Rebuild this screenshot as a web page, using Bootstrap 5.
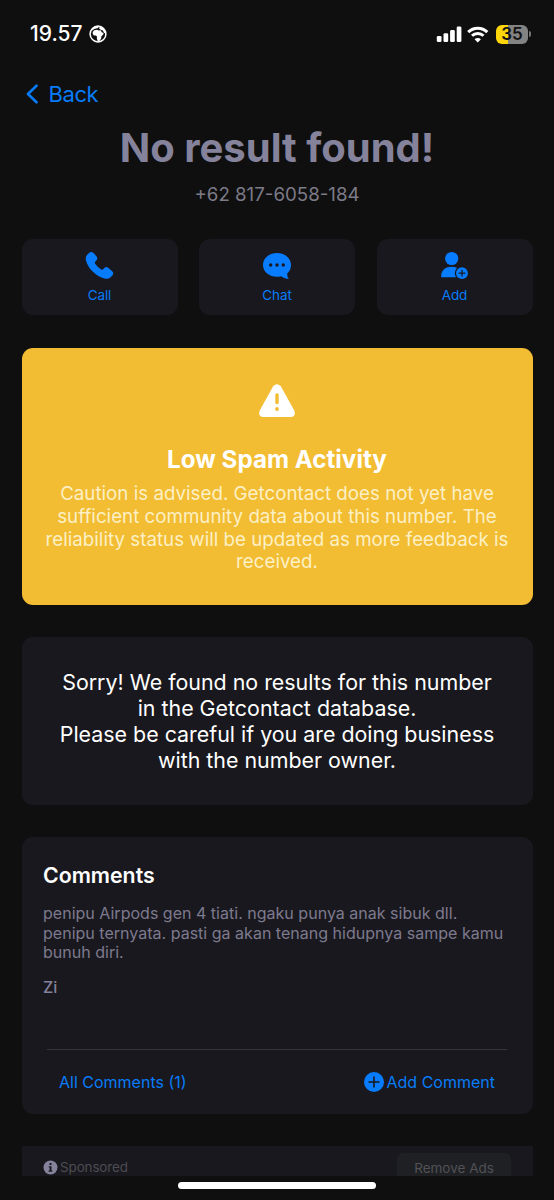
<!DOCTYPE html>
<html lang="en" data-bs-theme="dark">
<head>
<meta charset="utf-8">
<meta name="viewport" content="width=device-width, initial-scale=1">
<title>Getcontact</title>
<link rel="stylesheet" href="https://cdn.jsdelivr.net/npm/bootstrap@5.3.0/dist/css/bootstrap.min.css">
<style>
  body { background: #0f0f0f; font-family: Inter, "Liberation Sans", sans-serif; }
  .phone-screen { width: 554px; height: 1200px; background: #0f0f0f; }
  svg { display: block; flex: none; }
  .status-bar { height: 68px; padding: 0 23px 0 30px; }
  .clock { font-size: 21px; font-weight: 500; line-height: 24px; color: #fff; }
  .globe { margin-left: 7px; }
  .battery { width: 32px; height: 19px; border-radius: 6px; background: linear-gradient(90deg, #ffd60a 37%, #838383 37%); color: #111; font-size: 17px; font-weight: 600; line-height: 19px; margin-left: 6px; }
  .battery-cap { width: 2px; height: 6px; border-radius: 0 2px 2px 0; background: #777; margin-left: 1px; }
  .tap { color: #087cf8; text-decoration: none; }
  .back-link { height: 52px; padding-left: 26px; gap: 9.5px; font-size: 22px; letter-spacing: -.4px; }
  .result-title { font-size: 40px; line-height: 48px; font-weight: 700; color: #85829b; margin-top: 4px; }
  .number-line { font-size: 18.7px; line-height: 24px; color: #7c7b87; margin-top: 11px; }
  .page-body { margin: 32px 21.5px 0 21.5px; }
  .action-row { gap: 21.5px; }
  .panel { background: #19181e; border-radius: 11px; }
  .action-tile { height: 75.5px; padding-top: 12px; font-size: 13.5px; line-height: 18px; letter-spacing: -.1px; }
  .tile-label { margin-top: 5px; }
  .spam-card { background: #f2bc33; height: 257px; margin-top: 33px; border-radius: 11px; padding-top: 36.5px; }
  .spam-title { font-size: 24.2px; line-height: 30px; font-weight: 650; color: #fff; margin-top: 27px; }
  .spam-text { font-size: 18.76px; line-height: 22.6px; color: #fdf0c4; margin-top: 8.4px; }
  .sorry-card { height: 168px; margin-top: 32px; padding-top: 32px; font-size: 21.4px; line-height: 26px; color: #fff; }
  .comments-card { height: 277px; margin-top: 32px; padding: 24px 21.5px 0; }
  .comments-title { font-size: 21.3px; line-height: 28px; font-weight: 600; color: #fff; }
  .comment-text { font-size: 16.05px; line-height: 19.5px; color: #7d7a8e; margin-top: 15.5px; }
  .comment-name { font-size: 16px; line-height: 20px; font-weight: 500; color: #85829b; margin-top: 14px; }
  .divider { height: 1px; background: #35353a; margin: 52px 4px 0; }
  .comment-actions { font-size: 16px; padding: 0 16px; height: 65px; }
  .add-link { gap: 3px; }
  .ad-strip { height: 29.5px; margin-top: 32.5px; padding: 7px 21.5px 0; background: #19181e; font-size: 13.5px; color: #4c4c50; }
  .sponsor { height: 29px; gap: 2px; letter-spacing: -.15px; }
  .remove-btn { width: 114px; height: 30px; border-radius: 6px; background: #1f2024; color: #515156; line-height: 30px; }
  .home-bar { width: 198px; height: 7px; border-radius: 4px; background: #fff; margin-top: 6.500px; }
</style>
</head>
<body>
<main class="phone-screen overflow-hidden text-nowrap">
  <header class="status-bar d-flex align-items-center justify-content-between">
    <div class="d-flex align-items-center clock"><span>19.57</span>
      <svg class="globe" width="18" height="18" viewBox="0 0 18 18"><circle cx="9" cy="9" r="7.900" fill="none" stroke="#fff" stroke-width="1.500"/><path fill="#fff" d="M3.700 7 5.200 5.200l3-.5 1.300.8 2.300-.2.900 2 1.900.6-.4 1.700-1.900 1.800-.1 2.200-1.900 2.600-1.700-.3-.8-2.600.2-1.700-1.100-1.100-2 .1-1.200-1.600zM2.800 4.400 6 1.300l4-.4-.8 2.100-2 .5-1.900.4-1.900 1.500zM10.800 1l4.700 3.200 1.500 4-1.900-.3-1.300-2.400-2.200-.7-1.500-1.200z"/></svg>
    </div>
    <div class="d-flex align-items-center">
      <svg width="26" height="17" viewBox="0 0 26 17" fill="#fff"><rect x=".8" y="10" width="4.700" height="6" rx="1.300"/><rect x="7.500" y="7.300" width="4.700" height="8.700" rx="1.300"/><rect x="14.100" y="4.100" width="4.700" height="11.900" rx="1.300"/><rect x="20.700" y=".5" width="4.700" height="15.500" rx="1.300"/></svg>
      <svg class="ms-1" width="24" height="17" viewBox="0 0 24 17" fill="none" stroke="#fff" stroke-width="3"><path d="M2.200 6.100a13.500 13.500 0 0 1 19.100 0"/><path d="M6 9.800a8.200 8.200 0 0 1 11.500 0"/><path d="m11.750 16.500-3.200-3.300a4.600 4.600 0 0 1 6.400 0z" fill="#fff" stroke="none"/></svg>
      <div class="battery text-center">35</div><div class="battery-cap"></div>
    </div>
  </header>

  <a href="#" class="tap back-link d-flex align-items-center">
    <svg width="13" height="20" viewBox="0 0 13 20" fill="none" stroke="#087cf8" stroke-width="2.600" stroke-linecap="round" stroke-linejoin="round"><path d="M10.500 1.700 2 10l8.500 8.300"/></svg>
    <span>Back</span>
  </a>

  <h1 class="result-title text-center mb-0">No result found!</h1>
  <div class="number-line text-center">+62 817-6058-184</div>

  <div class="page-body">
    <div class="action-row d-flex">
      <a href="#" class="tap panel action-tile flex-fill w-100 d-flex flex-column align-items-center">
        <svg width="30" height="30" viewBox="0 0 30 30" fill="#087cff"><path d="M2.200 3.800 4 1.900Q6.300.1 8.600 2.100l3 3.300q1.500 2-.1 3.900l-1.300 1.500q-.8 1 .1 2.200 2.500 3.500 5.900 5.600 1 .6 1.900-.3l1.300-1.400q1.900-1.500 3.800-.1l4 3.400q2 2 .3 4l-1.900 2q-2.500 2.400-6 1.300C11 25.300 3.500 18 1 9.800q-.9-3.600 1.200-6z"/></svg>
        <span class="tile-label">Call</span>
      </a>
      <a href="#" class="tap panel action-tile flex-fill w-100 d-flex flex-column align-items-center">
        <svg width="30" height="30" viewBox="0 0 30 30"><path fill="#087cff" d="M15 2C7.200 2 1 7.200 1 14s6.200 11.800 14 11.800q2.200 0 4.100-.6 2.700 2.400 7 2.700.7 0 .3-.6-1.500-2-1.100-4.900Q29 19 29 14C29 7.200 22.800 2 15 2z"/><g fill="#19181e"><circle cx="8.700" cy="14" r="1.700"/><circle cx="15" cy="14" r="1.700"/><circle cx="21.300" cy="14" r="1.700"/></g></svg>
        <span class="tile-label">Chat</span>
      </a>
      <a href="#" class="tap panel action-tile flex-fill w-100 d-flex flex-column align-items-center">
        <svg width="30" height="30" viewBox="0 0 30 30"><g fill="#087cff"><circle cx="11.700" cy="7.500" r="6.600"/><path d="M1.200 26.200v-1.500C1.200 19 5.900 15.700 11.600 15.700c3.500 0 6 1 8 3v7.500z"/></g><circle cx="22" cy="22.200" r="7.200" fill="#19181e"/><circle cx="22" cy="22.200" r="5.900" fill="#087cff"/><path d="M22 19.300v5.800M19.100 22.200h5.800" stroke="#19181e" stroke-width="1.300" stroke-linecap="round"/></svg>
        <span class="tile-label">Add</span>
      </a>
    </div>

    <section class="spam-card text-center">
      <svg class="mx-auto" width="38" height="34" viewBox="0 0 38 34"><path fill="#fff" d="M15.200 2.200Q19-1.700 22.800 2.200L36.300 26.500Q38.200 32.500 32.800 33H5.200Q-.2 32.500 1.700 26.500z"/><path d="M19 11v7.500" stroke="#f2bc33" stroke-width="3.400" stroke-linecap="round"/><circle cx="19" cy="25" r="1.900" fill="#f2bc33"/></svg>
      <h2 class="spam-title mb-0">Low Spam Activity</h2>
      <p class="spam-text mb-0">Caution is advised. Getcontact does not yet have<br>sufficient community data about this number. The<br>reliability status will be updated as more feedback is<br>received.</p>
    </section>

    <section class="panel sorry-card text-center">Sorry! We found no results for this number<br>in the Getcontact database.<br>Please be careful if you are doing business<br>with the number owner.</section>

    <section class="panel comments-card">
      <h2 class="comments-title mb-0">Comments</h2>
      <p class="comment-text mb-0">penipu Airpods gen 4 tiati. ngaku punya anak sibuk dll.<br>penipu ternyata. pasti ga akan tenang hidupnya sampe kamu<br>bunuh diri.</p>
      <div class="comment-name">Zi</div>
      <div class="divider"></div>
      <div class="comment-actions d-flex align-items-center justify-content-between">
        <a href="#" class="tap">All Comments (1)</a>
        <a href="#" class="tap add-link d-flex align-items-center"><svg width="20" height="20" viewBox="0 0 20 20"><circle cx="10" cy="10" r="10" fill="#087cff"/><path d="M10 5v10M5 10h10" stroke="#19181e" stroke-width="1.600" stroke-linecap="round"/></svg><span>Add Comment</span></a>
      </div>
    </section>

    <section class="ad-strip d-flex justify-content-between overflow-hidden">
      <div class="d-flex align-items-center sponsor"><svg width="15" height="15" viewBox="0 0 15 15"><circle cx="7.500" cy="7.500" r="7" fill="#85829b"/><path fill="#19181e" d="M6.500 3h2v2h-2zM5.800 6.300h2.700v4.200h.8v1.300H5.600v-1.300h1V7.600h-.8z"/></svg><span>Sponsored</span></div>
      <div class="remove-btn text-center">Remove Ads</div>
    </section>
  </div>
  <div class="home-bar mx-auto"></div>
</main>
<script src="https://cdn.jsdelivr.net/npm/bootstrap@5.3.0/dist/js/bootstrap.bundle.min.js"></script>
</body>
</html>
